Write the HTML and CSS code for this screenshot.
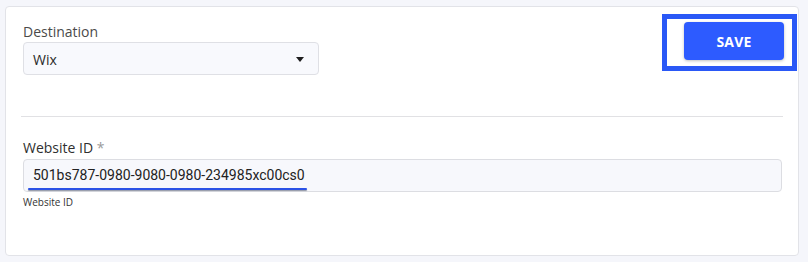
FILE: index.html
```html
<!DOCTYPE html>
<html>
<head>
<meta charset="utf-8">
<link rel="stylesheet" href="styles.css">
</head>
<body>
<div class="card">
  <div class="top-row">
    <div class="field">
      <div class="label">Destination</div>
      <div class="select">
        <span class="select-value">Wix</span>
        <span class="caret"></span>
      </div>
    </div>
    <div class="save-wrap">
      <button class="save">SAVE</button>
    </div>
  </div>
  <div class="divider"></div>
  <div class="id-field">
    <div class="label strong">Website ID <span class="req">*</span></div>
    <div class="input">
      <span class="input-value">501bs787-0980-9080-0980-234985xc00cs0</span>
      <span class="underline"></span>
    </div>
    <div class="helper">Website ID</div>
  </div>
</div>
</body>
</html>
```
FILE: styles.css
```css
html, body {
  margin: 0;
  padding: 0;
  background: #f5f6fb;
}
body {
  font-family: "Open Sans", "Noto Sans", sans-serif;
  width: 808px;
  height: 262px;
  overflow: hidden;
}
.card {
  box-sizing: border-box;
  margin: 6px 0 0 5px;
  width: 794px;
  height: 250px;
  background: #fff;
  border: 1px solid #e2e3e8;
  border-radius: 4px;
  padding: 15px 15px 0 17px;
}
.top-row {
  display: flex;
  justify-content: space-between;
  align-items: flex-start;
}
.field {
  width: 296px;
}
.label {
  font-size: 14px;
  line-height: 18px;
  color: #4a4a4a;
  margin-top: 1px;
}
.label.strong {
  color: #2f2f2f;
  margin-top: 0;
}
.req {
  color: #9a9a9a;
}
.select {
  box-sizing: border-box;
  margin-top: 1px;
  height: 33px;
  border: 1px solid #dfe0e5;
  border-radius: 4px;
  background: #f8f9fd;
  display: flex;
  align-items: center;
  justify-content: space-between;
  padding: 1px 14px 0 9px;
}
.select-value {
  font-size: 14px;
  color: #2a2a2a;
  font-weight: 500;
}
.caret {
  width: 0;
  height: 0;
  border-left: 4.5px solid transparent;
  border-right: 4.5px solid transparent;
  border-top: 5px solid #1e1e1e;
  margin-top: 1px;
}
.save-wrap {
  position: relative;
  margin-right: -1px;
}
.save-wrap::before {
  content: "";
  position: absolute;
  top: -8px;
  left: -22px;
  right: -13px;
  bottom: -11px;
  border: 5px solid #2a58f6;
  pointer-events: none;
}
.save {
  display: block;
  width: 100px;
  height: 38px;
  border: none;
  border-radius: 4px;
  background: #2d5bff;
  color: #fff;
  font-family: "Open Sans", sans-serif;
  font-weight: 700;
  font-size: 14px;
  letter-spacing: 0.2px;
  box-shadow: 0 1px 3px rgba(0, 0, 0, 0.25);
  padding: 0;
}
.divider {
  margin: 41px 0 0 -2px;
  height: 1px;
  background: #e1e1e4;
}
.id-field {
  margin-top: 22px;
}
.input {
  position: relative;
  box-sizing: border-box;
  margin-top: 2px;
  width: 759px;
  height: 33px;
  border: 1px solid #dcdde2;
  border-radius: 4px;
  background: #f7f8fc;
  padding-left: 9px;
}
.input-value {
  display: block;
  font-family: Roboto, "Liberation Sans", sans-serif;
  font-size: 14px;
  line-height: 31px;
  color: #222;
}
.underline {
  position: absolute;
  left: 4px;
  top: 28px;
  width: 279px;
  height: 2px;
  border-radius: 2px;
  background: #2b52e6;
  box-shadow: 0 1px 1px rgba(20, 30, 60, 0.45);
}
.helper {
  margin-top: 3px;
  font-size: 10px;
  line-height: 14px;
  color: #333;
}
```
